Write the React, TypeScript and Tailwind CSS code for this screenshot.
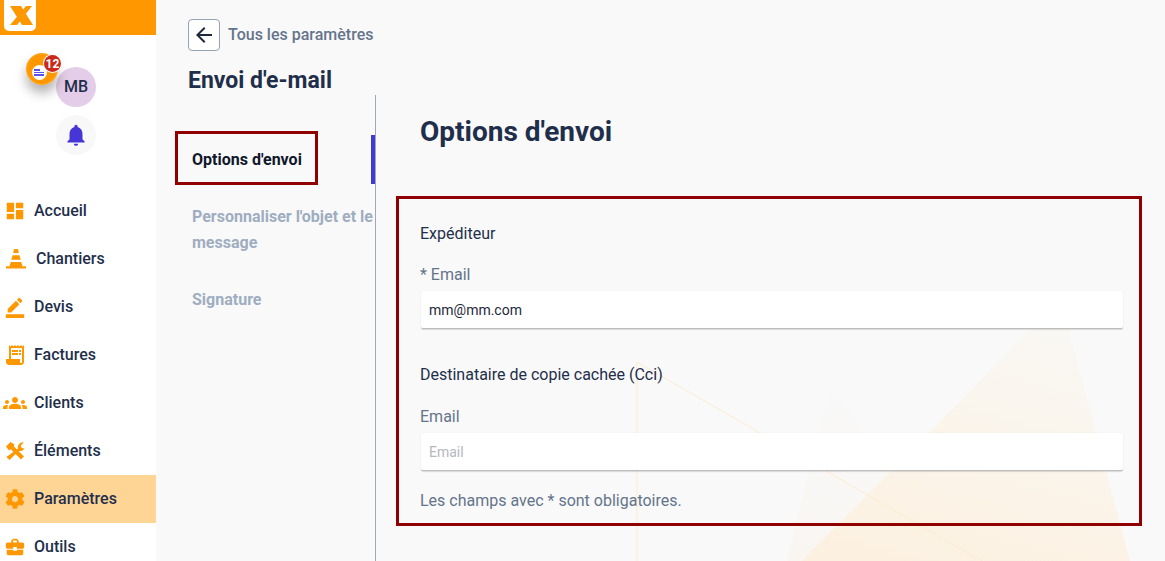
import React from "react";
import { MdDashboard, MdBorderColor, MdReceiptLong, MdGroups, MdBusinessCenter, MdNotifications, MdArrowBack } from "react-icons/md";
import { FaCog } from "react-icons/fa";

const Cone = ({ className }: { className?: string }) => (
  <svg viewBox="0 0 20 20" className={className} fill="currentColor">
    <path d="M8.2 0h3.6l1.1 4H7.1z" />
    <path d="M6.500 6.300h7l1.200 4.400H5.300z" />
    <path d="M4.700 13h10.600l1.200 4.300H20v2.200H0v-2.200h3.500z" />
  </svg>
);

const Tools = ({ className }: { className?: string }) => (
  <svg viewBox="0 0 20 20" className={className} fill="currentColor">
    <path d="M1 5.500 5.500 1l4 2.500-.8 1.800L19 15.600 16 18.600 5.800 8.300 4 9.500z" />
    <path d="M13 7.600a5 5 0 0 1 5.800-6.200l-3 3 .7 2.300 2.300.7 1-1a5 5 0 0 1-6.200 3.500L4.500 19.100 1.400 16z" />
  </svg>
);

const items: [string, React.ComponentType<{ className?: string }>, string, string][] = [
  ["Accueil", MdDashboard, "w-[22px] h-[22px] ml-[4px] mr-[8px]", ""],
  ["Chantiers", Cone, "w-[20px] h-[20px] ml-[6px] mr-[10px]", ""],
  ["Devis", MdBorderColor, "w-[22px] h-[22px] ml-[4px] mr-[8px]", ""],
  ["Factures", MdReceiptLong, "w-[24px] h-[24px] ml-[3px] mr-[7px]", ""],
  ["Clients", MdGroups, "w-[24px] h-[24px] ml-[3px] mr-[7px]", ""],
  ["Éléments", Tools, "w-[20px] h-[20px] ml-[5px] mr-[9px]", ""],
  ["Paramètres", FaCog, "w-[20px] h-[20px] ml-[5px] mr-[9px]", "bg-[#ffd596]"],
  ["Outils", MdBusinessCenter, "w-[22px] h-[22px] ml-[4px] mr-[8px]", ""],
];

const Background = () => (
  <svg className="absolute left-[156px] top-0 w-[1009px] h-[561px] pointer-events-none" viewBox="156 0 1009 561">
    <defs>
      <linearGradient id="tri1" x1="0.3" y1="1" x2="0.7" y2="0">
        <stop offset="0" stopColor="#fcf1e1" />
        <stop offset="1" stopColor="#f9f7f3" />
      </linearGradient>
      <linearGradient id="tri2" x1="0.2" y1="1" x2="0.5" y2="0">
        <stop offset="0" stopColor="#f9f6f2" />
        <stop offset="1" stopColor="#f9f9f9" />
      </linearGradient>
    </defs>
    <polygon points="787,561 830,385 960,561" fill="url(#tri2)" />
    <polygon points="802,561 1032,328 1068,328 1130,561" fill="url(#tri1)" />
    <line x1="637" y1="362" x2="982" y2="561" stroke="#fdebd0" strokeWidth="1" />
    <line x1="637" y1="362" x2="637" y2="561" stroke="#fdebd0" strokeWidth="1" />
  </svg>
);

const Field = ({ label, value, placeholder }: { label: string; value?: string; placeholder?: string }) => (
  <div className="flex flex-col">
    <label className="text-[16px] leading-[24px] text-[#64748b]">{label}</label>
    <input
      readOnly
      value={value ?? ""}
      placeholder={placeholder}
      className="relative mt-[4px] ml-[1px] h-[38px] rounded-[2px] bg-white px-[8px] text-[14px] text-[#1e293b] placeholder:text-[#b4b8bd] outline-none border-b border-[#bdbdbd] shadow-[0_1px_1px_rgba(0,0,0,0.12),0_0_2px_rgba(0,0,0,0.06)]"
    />
  </div>
);

export default function App() {
  return (
    <div className="relative flex h-[561px] w-[1165px] overflow-hidden bg-[#f9f9f9] font-['Roboto',sans-serif] text-[#1f2f4b]">
      <Background />
      <aside className="relative flex w-[156px] shrink-0 flex-col bg-white">
        <div className="h-[35px] shrink-0 bg-[#ff9800] pl-[4px]">
          <svg viewBox="0 0 32 31" className="h-[31px] w-[32px]">
            <path d="M0 0h32v26a5 5 0 0 1-5 5H5a5 5 0 0 1-5-5z" fill="#fff" />
            <path d="M6 6h11l12 19H18z" fill="#ff9800" />
            <path d="M22 6h6L13 25H6z" fill="#ff9800" />
          </svg>
        </div>
        <div className="relative flex h-[152px] shrink-0 flex-col items-center pr-[4px] pt-[32px]">
          <div className="flex h-[40px] w-[40px] items-center justify-center rounded-full bg-[#e4cde8] text-[16px] font-medium text-[#1f2f4b]">MB</div>
          <div className="mt-[8px] flex h-[40px] w-[40px] items-center justify-center rounded-full bg-[#f8f8f8]">
            <MdNotifications className="h-[26px] w-[26px] text-[#4636d8]" />
          </div>
          <div className="absolute left-[26px] top-[18px] h-[32px] w-[32px] rounded-full bg-[radial-gradient(circle_at_50%_50%,#ff9800_60%,#ffc56e_100%)] shadow-[0_8px_12px_rgba(0,0,0,0.3)]">
            <div className="absolute left-[6px] top-[12px] flex h-[15px] w-[15px] flex-col items-start justify-center gap-[1px] rounded-full bg-white pl-[2px]">
              <span className="h-[1.500px] w-[6px] bg-[#5b52e8]" />
              <span className="h-[1.500px] w-[10px] bg-[#5b52e8]" />
              <span className="h-[1.500px] w-[10px] bg-[#5b52e8]" />
            </div>
            <span className="absolute left-[18px] top-[2px] flex h-[17px] w-[17px] items-center justify-center rounded-full bg-[#c92a1c] text-[12px] font-bold text-white ring-1 ring-white">12</span>
          </div>
        </div>
        <nav className="flex shrink-0 flex-col">
          {items.map(([label, Icon, iconClass, rowClass]) => (
            <div key={label} className={`flex h-[48px] shrink-0 items-center text-[16px] font-medium text-[#1f2f4b] ${rowClass}`}>
              <Icon className={`shrink-0 text-[#ff9800] ${iconClass}`} />
              <span>{label}</span>
            </div>
          ))}
        </nav>
      </aside>

      <main className="relative flex min-w-0 flex-1 flex-col">
        <header className="h-[95px] shrink-0 pl-[32px] pt-[19px]">
          <div className="flex items-center">
            <button className="flex h-[32px] w-[32px] items-center justify-center rounded-[4px] border border-[#94a3b8] bg-white">
              <MdArrowBack className="h-[24px] w-[24px] text-[#1e293b]" />
            </button>
            <span className="ml-[8px] text-[16px] font-medium text-[#64748b]">Tous les paramètres</span>
          </div>
          <h1 className="mt-[15px] text-[23px] font-bold leading-[30px] text-[#1f2f4b]">Envoi d'e-mail</h1>
        </header>
        <div className="flex min-h-0 flex-1">
          <div className="relative w-[220px] shrink-0 border-r border-[#a0a8b4] pt-[36px]">
            <div className="ml-[19px] flex h-[54px] w-[143px] items-center border-[3px] border-[#900000] pl-[14px] pt-[4px] text-[16px] font-bold text-[#0f172a]">
              Options d'envoi
            </div>
            <div className="absolute right-0 top-[40px] h-[49px] w-[4px] bg-[#4338d8]" />
            <div className="mt-[19px] pl-[36px] text-[16px] font-bold leading-[26px] text-[#9fadc1]">
              Personnaliser l'objet et le message
            </div>
            <div className="mt-[31px] pl-[36px] text-[16px] font-bold leading-[26px] text-[#9fadc1]">Signature</div>
          </div>
          <div className="min-w-0 flex-1 pl-[20px] pr-[23px]">
            <h2 className="pl-[24px] pt-[18px] text-[28px] font-bold leading-[38px] text-[#1f2f4b]">Options d'envoi</h2>
            <section className="relative mt-[45px] h-[330px] border-[3px] border-[#900000] pl-[21px] pr-[16px] pt-[23px]">
              <h3 className="text-[16px] leading-[24px] text-[#1f2f4b]">Expéditeur</h3>
              <div className="mt-[17px]">
                <Field label="* Email" value="mm@mm.com" />
              </div>
              <h3 className="mt-[34px] text-[16px] leading-[24px] text-[#1f2f4b]">Destinataire de copie cachée (Cci)</h3>
              <div className="mt-[18px]">
                <Field label="Email" placeholder="Email" />
              </div>
              <p className="mt-[18px] text-[16px] leading-[24px] text-[#64748b]">Les champs avec * sont obligatoires.</p>
            </section>
          </div>
        </div>
      </main>
    </div>
  );
}
